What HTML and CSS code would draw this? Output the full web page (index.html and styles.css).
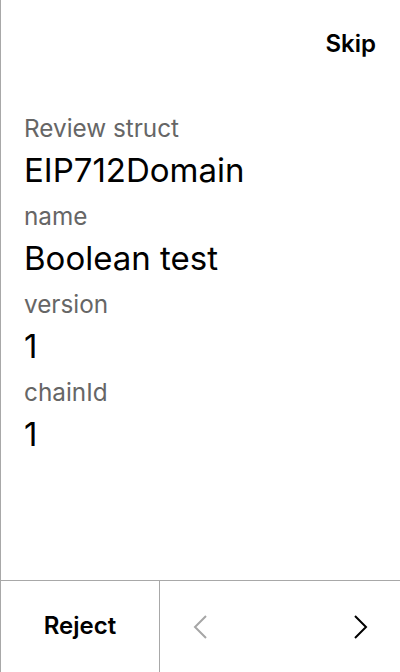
FILE: index.html
```html
<!DOCTYPE html>
<html>
<head>
<meta charset="utf-8">
<link rel="stylesheet" href="styles.css">
</head>
<body>
<div class="screen">
  <header class="top">
    <span class="skip">Skip</span>
  </header>
  <main class="content">
    <div class="field">
      <div class="label">Review struct</div>
      <div class="value">EIP712Domain</div>
    </div>
    <div class="field">
      <div class="label">name</div>
      <div class="value">Boolean test</div>
    </div>
    <div class="field">
      <div class="label">version</div>
      <div class="value">1</div>
    </div>
    <div class="field">
      <div class="label">chainId</div>
      <div class="value">1</div>
    </div>
  </main>
  <footer class="bottom">
    <div class="reject">Reject</div>
    <div class="nav">
      <svg class="chev" width="14" height="24" viewBox="0 0 14 24"><path d="M13 1 L2 12 L13 23" fill="none" stroke="#a6a6a6" stroke-width="2"/></svg>
      <svg class="chev" width="14" height="24" viewBox="0 0 14 24"><path d="M1 1 L12 12 L1 23" fill="none" stroke="#000" stroke-width="2"/></svg>
    </div>
  </footer>
</div>
</body>
</html>
```
FILE: styles.css
```css
* { box-sizing: border-box; }
html, body { margin: 0; padding: 0; background: #fff; }
body { font-family: Inter, "Noto Sans", sans-serif; color: #000; }
.screen {
  width: 400px;
  height: 672px;
  border-left: 1px solid #a8a8a8;
  display: flex;
  flex-direction: column;
}
.top {
  height: 88px;
  display: flex;
  justify-content: flex-end;
  align-items: flex-start;
  padding: 30px 24px 0 0;
}
.skip { font-size: 24px; font-weight: 600; line-height: 28px; }
.content {
  flex: 1;
  padding: 24px 0 0 23px;
  display: flex;
  flex-direction: column;
}
.field { height: 88px; display: flex; flex-direction: column; }
.label { font-size: 24.3px; color: #666; line-height: 32px; margin-bottom: 4px; }
.value { font-size: 33px; line-height: 44px; }
.bottom {
  height: 92px;
  border-top: 1px solid #a8a8a8;
  display: flex;
}
.reject {
  width: 159px;
  border-right: 1px solid #a8a8a8;
  display: flex;
  align-items: center;
  justify-content: center;
  font-size: 24px;
  font-weight: 600;
  padding-bottom: 2px;
}
.nav {
  flex: 1;
  display: flex;
  align-items: center;
  justify-content: space-between;
  padding: 0 32px 0 33px;
}
```
